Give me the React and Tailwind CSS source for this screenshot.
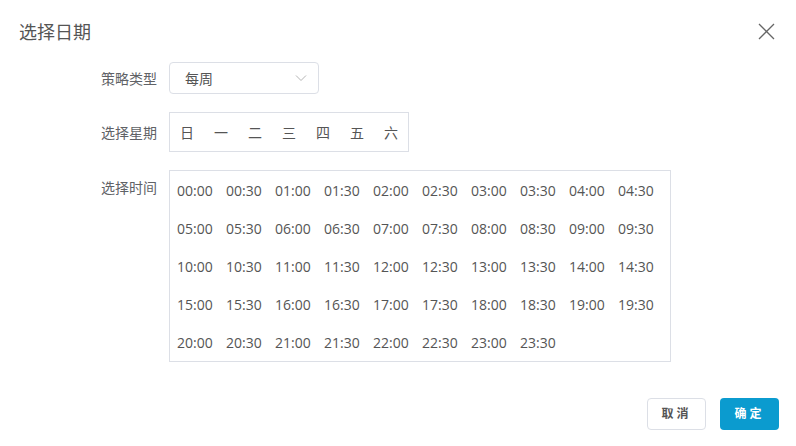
import React from "react";

const weekDays = ["日", "一", "二", "三", "四", "五", "六"];

const times = [];
for (let h = 0; h < 24; h++) {
  const hh = String(h).padStart(2, "0");
  times.push(`${hh}:00`, `${hh}:30`);
}

export default function App() {
  return (
    <div
      className="w-[796px] h-[446px] bg-white relative text-[#606266]"
      style={{ fontFamily: '"Open Sans", "Noto Sans CJK SC", sans-serif' }}
    >
      {/* Header */}
      <div className="flex items-center justify-between pl-[19px] pr-[21px] pt-[19px] h-[44px]">
        <h2 className="text-[18px] leading-[24px] text-[#555]">选择日期</h2>
        <button className="text-[#666]">
          <svg width="17" height="17" viewBox="0 0 17 17" fill="none" stroke="currentColor" strokeWidth="1.3">
            <path d="M1 1L16 16M16 1L1 16" />
          </svg>
        </button>
      </div>

      {/* Form */}
      <div className="flex flex-col gap-[18px] mt-[18px]">
        <div className="flex items-center">
          <label className="w-[157px] text-right text-[14px] mr-[12px]">策略类型</label>
          <div className="w-[150px] h-[32px] border border-[#dcdfe6] rounded-[4px] flex items-center justify-between pl-[15px] pr-[10px] text-[14px]">
            <span className="text-[#555]">每周</span>
            <svg width="14" height="14" viewBox="0 0 14 14" fill="none" stroke="#b4b4b4" strokeWidth="1">
              <path d="M2 4.5L7 9.5L12 4.5" />
            </svg>
          </div>
        </div>

        <div className="flex items-center">
          <label className="w-[157px] text-right text-[14px] mr-[12px]">选择星期</label>
          <div className="flex border border-[#dcdfe6] h-[40px] items-center">
            {weekDays.map((d) => (
              <span key={d} className="w-[34px] text-center text-[14px] text-[#555]">
                {d}
              </span>
            ))}
          </div>
        </div>

        <div className="flex items-start">
          <label className="w-[157px] text-right text-[14px] mr-[12px] mt-[7px]">选择时间</label>
          <div className="border border-[#dcdfe6] w-[502px] h-[192px] pl-[7px] grid grid-cols-[repeat(10,49px)] auto-rows-[38px] items-center">
            {times.map((t) => (
              <span key={t} className="text-[14px] text-[#555]">
                {t}
              </span>
            ))}
          </div>
        </div>
      </div>

      {/* Footer */}
      <div className="flex justify-end gap-[14px] pr-[17px] mt-[36px]">
        <button className="w-[59px] h-[32px] border border-[#dcdfe6] rounded-[4px] text-[12px] font-bold tracking-[3px] text-[#555]">
          取消
        </button>
        <button className="w-[59px] h-[32px] rounded-[4px] bg-[#0b9bcf] text-white text-[12px] font-bold tracking-[3px]">
          确定
        </button>
      </div>
    </div>
  );
}
